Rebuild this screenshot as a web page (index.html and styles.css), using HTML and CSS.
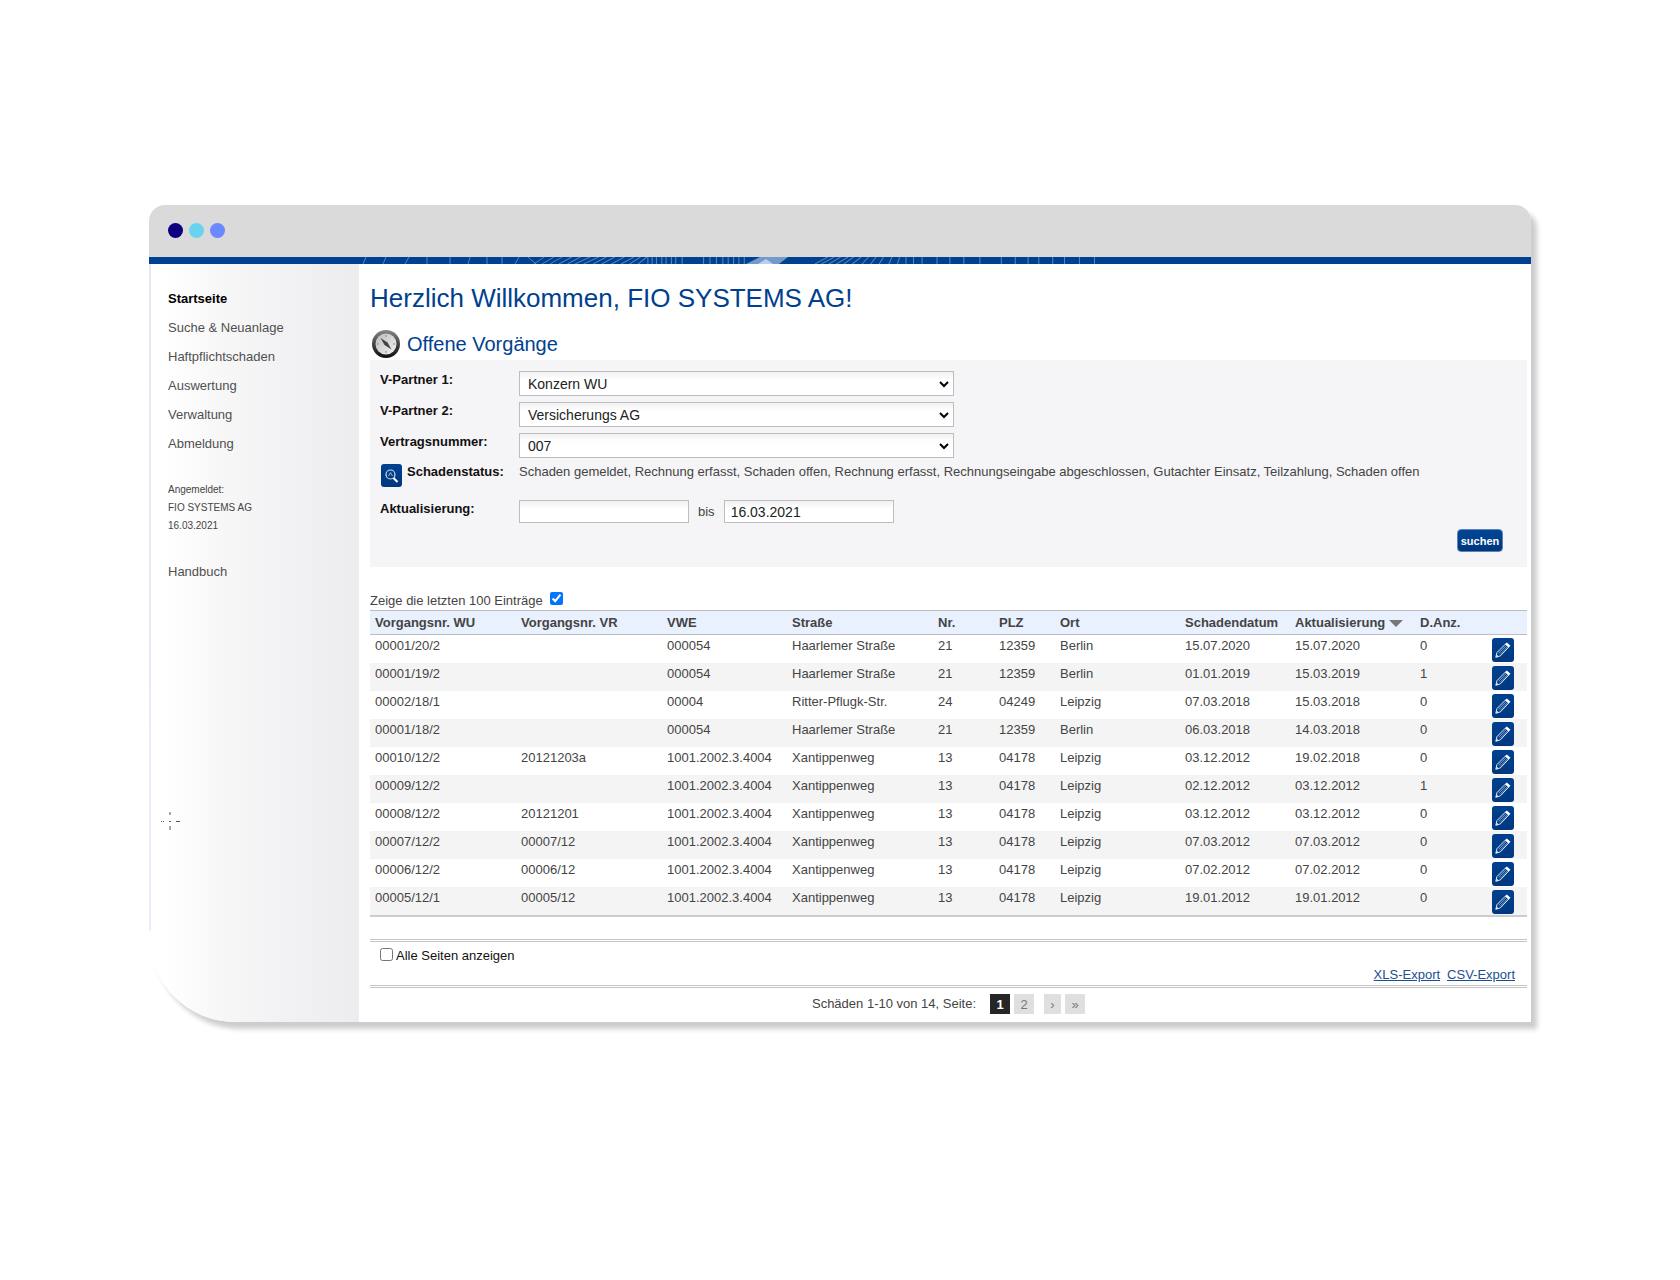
FILE: index.html
```html
<!DOCTYPE html>
<html lang="de">
<head>
<meta charset="utf-8">
<title>Offene Vorgänge</title>
<link rel="stylesheet" href="styles.css">
</head>
<body>
<svg class="defs" aria-hidden="true">
  <symbol id="pencil" viewBox="0 0 22 24">
    <path d="M3.800 19.300 L5 14.500 L13.500 6 L16.800 9 L8.500 17.800 Z" fill="none" stroke="#dfe9f7" stroke-width="1"/>
    <path d="M6.500 15.300 L14 7.800 M8 16.500 L15.300 9" stroke="#a9bfe0" stroke-width=".8"/>
    <path d="M13 6.300 L14.800 4.500 L18.500 7.700 L16.700 9.600 Z" fill="#fff"/>
    <path d="M3.800 19.300 L4.600 16.400 L6.800 18.500 Z" fill="#dfe9f7"/>
  </symbol>
</svg>
<div class="window">
  <div class="titlebar"><span class="dot navy"></span><span class="dot cyan"></span><span class="dot blue"></span></div>
  <div class="stripe">
    <svg class="pattern" width="740" height="7" viewBox="0 0 740 7" aria-hidden="true">
      <g stroke="#8fb0da" stroke-width="1" opacity=".6" fill="none">
        <path d="M4 0l-3 7M24 0l-3 7M47 0l-4 7M65 0v7M88 0v7M108 0l-2 7M125 0v7M140 0v7M157 0l-4 7M166 0l8 7M172 7l10-7M180 7l12-7M188 7l12-7"/>
        <path transform="translate(-14) scale(1.071 1)" d="M197 7l12-7M205 7l12-7M212 7l14-7M220 7l14-7M229 7l12-7M237 7l12-7M246 7l12-7M255 7l12-7M263 7l10-7M271 7l8-7M280 0v7M284 0v7M288 0v7M293 0v7M297 0v7M302 0v7M306 0v7M312 0v7M332 0v7M338 0v7M344 0v7M350 0v7M355 0v7M360 0v7M365 0v7M370 0v7M436 7l12-7M442 7l12-7M449 7l11-7M456 7l11-7M463 7l9-7M471 7l8-7M480 7l6-7M488 7l5-7M496 7l4-7M505 7l3-7M513 7l2-7M521 0v7M528 0v7M536 0v7M550 0v7M562 0v7M575 0v7M590 0v7M610 0v7M623 0v7M635 0v7M645 0v7M658 0v7M669 0v7M683 0v7M697 0v7"/>
      </g>
      <path d="M384 7l14-7h28l-9 7z" fill="#8fb0da" opacity=".8"/>
      <path d="M396 7l8-5 7 5z" fill="#dbe7f5" opacity=".7"/>
    </svg>
  </div>
  <div class="body">
    <aside class="sidebar">
      <nav class="menu">
        <a class="current" href="#">Startseite</a>
        <a href="#">Suche &amp; Neuanlage</a>
        <a href="#">Haftpflichtschaden</a>
        <a href="#">Auswertung</a>
        <a href="#">Verwaltung</a>
        <a href="#">Abmeldung</a>
      </nav>
      <p class="session">Angemeldet:<br>FIO SYSTEMS AG<br>16.03.2021</p>
      <nav class="menu"><a href="#">Handbuch</a></nav>
      <svg class="crosshair" width="20" height="20" viewBox="0 0 20 20" aria-hidden="true">
        <path d="M1 10.500h1M3 10.500h1M9 10.500h2M16 10.500h4M10 1v3M10 15v4" stroke="#555" stroke-width="1"/>
      </svg>
    </aside>
    <main class="content">
      <h1>Herzlich Willkommen, FIO SYSTEMS AG!</h1>
      <div class="heading">
        <svg width="32" height="32" viewBox="0 0 32 32" aria-hidden="true">
          <defs>
            <linearGradient id="rim" x1="0" y1="0" x2="0" y2="1"><stop offset="0" stop-color="#888"/><stop offset=".5" stop-color="#444"/><stop offset="1" stop-color="#111"/></linearGradient>
            <linearGradient id="face" x1="0" y1="0" x2="1" y2="1"><stop offset="0" stop-color="#bbb"/><stop offset="1" stop-color="#f4f4f4"/></linearGradient>
          </defs>
          <circle cx="16" cy="16" r="14" fill="url(#rim)"/>
          <circle cx="16" cy="16" r="10.500" fill="url(#face)"/>
          <path d="M16 7v2M16 23v2M7 16h2M23 16h2" stroke="#888"/>
          <path d="M10.500 10L17.500 14.500L21.500 21.500L14.500 17Z" fill="#444"/>
        </svg>
        <h2>Offene Vorgänge</h2>
      </div>
      <form class="filter">
        <div class="row"><label for="p1">V-Partner 1:</label>
          <div class="select"><select id="p1"><option>Konzern WU</option></select><svg width="10" height="7" viewBox="0 0 10 7"><path d="M1 1l4 4 4-4" fill="none" stroke="#000" stroke-width="2"/></svg></div></div>
        <div class="row"><label for="p2">V-Partner 2:</label>
          <div class="select"><select id="p2"><option>Versicherungs AG</option></select><svg width="10" height="7" viewBox="0 0 10 7"><path d="M1 1l4 4 4-4" fill="none" stroke="#000" stroke-width="2"/></svg></div></div>
        <div class="row"><label for="vn">Vertragsnummer:</label>
          <div class="select"><select id="vn"><option>007</option></select><svg width="10" height="7" viewBox="0 0 10 7"><path d="M1 1l4 4 4-4" fill="none" stroke="#000" stroke-width="2"/></svg></div></div>
        <div class="row status">
          <div class="caption"><button type="button" class="icon" aria-label="Schadenstatus suchen"><svg width="21" height="23" viewBox="0 0 21 23"><circle cx="9.500" cy="10.500" r="4.500" fill="none" stroke="#cfdcf0" stroke-width="1.200"/><path d="M12.500 14l4 4" stroke="#fff" stroke-width="2.200"/><path d="M7.500 12l2-3.500 2 3.500" fill="none" stroke="#9db8de"/></svg></button><span>Schadenstatus:</span></div>
          <span>Schaden gemeldet, Rechnung erfasst, Schaden offen, Rechnung erfasst, Rechnungseingabe abgeschlossen, Gutachter Einsatz, Teilzahlung, Schaden offen</span>
        </div>
        <div class="row dates"><label for="von">Aktualisierung:</label>
          <div class="range"><input id="von" type="text"><label for="bis">bis</label><input id="bis" type="text" value="16.03.2021"></div></div>
        <button type="button" class="search">suchen</button>
      </form>
      <div class="latest"><label for="last">Zeige die letzten 100 Einträge</label><input id="last" type="checkbox" checked></div>
      <table>
        <colgroup><col class="c-wu"><col class="c-vr"><col class="c-vwe"><col class="c-str"><col class="c-nr"><col class="c-plz"><col class="c-ort"><col class="c-dat"><col class="c-akt"><col class="c-anz"><col></colgroup>
        <thead><tr><th>Vorgangsnr. WU</th><th>Vorgangsnr. VR</th><th>VWE</th><th>Straße</th><th>Nr.</th><th>PLZ</th><th>Ort</th><th>Schadendatum</th><th>Aktualisierung <svg width="14" height="7" viewBox="0 0 14 7"><path d="M0 0h14L7 7z" fill="#777"/></svg></th><th>D.Anz.</th><th></th></tr></thead>
        <tbody>
          <tr><td>00001/20/2</td><td></td><td>000054</td><td>Haarlemer Straße</td><td>21</td><td>12359</td><td>Berlin</td><td>15.07.2020</td><td>15.07.2020</td><td>0</td><td><button class="icon" aria-label="Bearbeiten"><svg width="22" height="24"><use href="#pencil"/></svg></button></td></tr>
          <tr><td>00001/19/2</td><td></td><td>000054</td><td>Haarlemer Straße</td><td>21</td><td>12359</td><td>Berlin</td><td>01.01.2019</td><td>15.03.2019</td><td>1</td><td><button class="icon" aria-label="Bearbeiten"><svg width="22" height="24"><use href="#pencil"/></svg></button></td></tr>
          <tr><td>00002/18/1</td><td></td><td>00004</td><td>Ritter-Pflugk-Str.</td><td>24</td><td>04249</td><td>Leipzig</td><td>07.03.2018</td><td>15.03.2018</td><td>0</td><td><button class="icon" aria-label="Bearbeiten"><svg width="22" height="24"><use href="#pencil"/></svg></button></td></tr>
          <tr><td>00001/18/2</td><td></td><td>000054</td><td>Haarlemer Straße</td><td>21</td><td>12359</td><td>Berlin</td><td>06.03.2018</td><td>14.03.2018</td><td>0</td><td><button class="icon" aria-label="Bearbeiten"><svg width="22" height="24"><use href="#pencil"/></svg></button></td></tr>
          <tr><td>00010/12/2</td><td>20121203a</td><td>1001.2002.3.4004</td><td>Xantippenweg</td><td>13</td><td>04178</td><td>Leipzig</td><td>03.12.2012</td><td>19.02.2018</td><td>0</td><td><button class="icon" aria-label="Bearbeiten"><svg width="22" height="24"><use href="#pencil"/></svg></button></td></tr>
          <tr><td>00009/12/2</td><td></td><td>1001.2002.3.4004</td><td>Xantippenweg</td><td>13</td><td>04178</td><td>Leipzig</td><td>02.12.2012</td><td>03.12.2012</td><td>1</td><td><button class="icon" aria-label="Bearbeiten"><svg width="22" height="24"><use href="#pencil"/></svg></button></td></tr>
          <tr><td>00008/12/2</td><td>20121201</td><td>1001.2002.3.4004</td><td>Xantippenweg</td><td>13</td><td>04178</td><td>Leipzig</td><td>03.12.2012</td><td>03.12.2012</td><td>0</td><td><button class="icon" aria-label="Bearbeiten"><svg width="22" height="24"><use href="#pencil"/></svg></button></td></tr>
          <tr><td>00007/12/2</td><td>00007/12</td><td>1001.2002.3.4004</td><td>Xantippenweg</td><td>13</td><td>04178</td><td>Leipzig</td><td>07.03.2012</td><td>07.03.2012</td><td>0</td><td><button class="icon" aria-label="Bearbeiten"><svg width="22" height="24"><use href="#pencil"/></svg></button></td></tr>
          <tr><td>00006/12/2</td><td>00006/12</td><td>1001.2002.3.4004</td><td>Xantippenweg</td><td>13</td><td>04178</td><td>Leipzig</td><td>07.02.2012</td><td>07.02.2012</td><td>0</td><td><button class="icon" aria-label="Bearbeiten"><svg width="22" height="24"><use href="#pencil"/></svg></button></td></tr>
          <tr><td>00005/12/1</td><td>00005/12</td><td>1001.2002.3.4004</td><td>Xantippenweg</td><td>13</td><td>04178</td><td>Leipzig</td><td>19.01.2012</td><td>19.01.2012</td><td>0</td><td><button class="icon" aria-label="Bearbeiten"><svg width="22" height="24"><use href="#pencil"/></svg></button></td></tr>
        </tbody>
      </table>
      <div class="options">
        <label><input type="checkbox">Alle Seiten anzeigen</label>
        <div class="exports"><a href="#">XLS-Export</a><a href="#">CSV-Export</a></div>
      </div>
      <div class="pager"><span>Schäden 1-10 von 14, Seite:</span>
        <div class="pages"><button class="active">1</button><button>2</button></div>
        <div class="pages"><button class="step">›</button><button>»</button></div></div>
    </main>
  </div>
</div>
</body>
</html>
```
FILE: styles.css
```css
* { box-sizing: border-box; }
body {
  margin: 0;
  padding: 205px 149px 64px;
  background: #fff;
  color: #444;
  font: 13px/16px "Liberation Sans", Arial, sans-serif;
}
.defs { position: absolute; width: 0; height: 0; }
.window {
  border-radius: 16px 16px 0 86px;
  overflow: hidden;
  background: #fff;
  box-shadow: 6px 7px 5px #cdcdcf;
}
.titlebar {
  display: flex;
  align-items: center;
  gap: 6px;
  height: 52px;
  padding: 0 19px 2px;
  background: #dadada;
}
.dot { width: 15px; height: 15px; border-radius: 50%; }
.navy { background: #0c0080; }
.cyan { background: #69d2ee; }
.blue { background: #6a88ff; }
.stripe { height: 7px; padding-left: 213px; background: #004192; }
.pattern { display: block; }
.body { display: grid; grid-template-columns: 210px 1fr; }
.sidebar {
  padding: 27px 0 0 19px;
  background:
    linear-gradient(#e2e8ef, #e8eefc) 0 0 / 2px 88% no-repeat,
    linear-gradient(90deg, transparent 8%, #f8f7f8 34%, #f2f1f3 62%, #edecee);
}
.menu { display: flex; flex-direction: column; gap: 13px; }
.menu a { color: #505050; text-decoration: none; }
.menu .current { color: #000; font-weight: bold; }
.session { margin: 29px 0; font-size: 10px; line-height: 18px; }
.crosshair { display: block; margin: 231px 0 0 -8px; }
.content { padding: 18px 4px 8px 11px; min-width: 0; }
h1, h2 { margin: 0; color: #00418f; font-weight: normal; }
h1 { font-size: 26px; line-height: 32px; }
h2 { font-size: 20px; line-height: 24px; }
.heading { display: flex; align-items: center; gap: 5px; margin-top: 14px; }
.filter {
  display: flex;
  flex-direction: column;
  gap: 6px;
  min-height: 207px;
  padding: 11px 10px;
  background: #f5f4f6;
}
.row { display: grid; grid-template-columns: 139px 1fr; }
.row > label, .caption { color: #111; font-weight: bold; }
.row > label { padding-top: 1px; }
.select { position: relative; width: 435px; height: 25px; }
.select svg { position: absolute; right: 5px; top: 10px; pointer-events: none; }
select, input[type="text"] {
  border: 1px solid #bdbdbf;
  background: linear-gradient(#f1f1f1, #fff 8px);
  color: #222;
  font: 14px "Liberation Sans", Arial, sans-serif;
}
select { width: 100%; height: 25px; padding: 0 8px; appearance: none; border-radius: 0; }
.caption { display: flex; gap: 5px; }
.icon {
  display: block;
  padding: 0;
  border: 0;
  border-radius: 3px;
  background: linear-gradient(#00418f, #00387f);
}
.icon svg { display: block; }
.caption .icon { align-self: start; margin-left: 1px; }
.dates { margin-top: 7px; }
.range { display: flex; align-items: center; gap: 9px; }
.range input { width: 170px; height: 23px; padding: 0 6px; }
.search {
  align-self: flex-end;
  width: 46px;
  height: 23px;
  margin-right: 14px;
  padding: 0;
  border: 1px solid #5c82b8;
  border-radius: 4px;
  background: linear-gradient(#004798, #00367c);
  color: #fff;
  font: bold 11px "Liberation Sans", Arial, sans-serif;
}
.latest { display: flex; align-items: flex-start; gap: 7px; margin: 25px 0 1px; }
.latest label { padding-top: 1px; }
input[type="checkbox"] { width: 13px; height: 13px; margin: 0; }
table { width: 100%; table-layout: fixed; border-collapse: collapse; border-bottom: 2px solid #cdccd0; }
.c-wu, .c-vr { width: 146px; }
.c-vwe { width: 125px; }
.c-str { width: 146px; }
.c-nr, .c-plz { width: 61px; }
.c-ort, .c-akt { width: 125px; }
.c-dat { width: 110px; }
.c-anz { width: 72px; }
th { height: 24px; padding: 0 5px; border: 1px solid #bcbcc4; border-width: 1px 0; background: #e8f1fd; text-align: left; white-space: nowrap; }
td { height: 28px; padding: 3px 5px 0; vertical-align: top; }
td:last-child { padding: 3px 5px 1px; }
tbody tr:nth-child(even) { background: #f5f4f5; }
.options {
  display: flex;
  justify-content: space-between;
  height: 49px;
  margin-top: 22px;
  padding: 6px 12px 2px 10px;
  border: 3px double #c5c5c8;
  border-width: 3px 0;
}
.options label { display: flex; align-items: flex-start; gap: 3px; color: #111; }
.exports { display: flex; gap: 7px; align-self: flex-end; }
.exports a { color: #1c4f92; }
.pager { display: flex; justify-content: center; align-items: center; gap: 14px; margin-top: 6px; }
.pages { display: flex; gap: 4px; }
.pager .pages + .pages { margin-left: -4px; }
.pages button { width: 20px; height: 20px; padding: 0; border: 0; background: #dfdfdf; color: #777; font: 13px "Liberation Sans", Arial, sans-serif; }
.pages .step { width: 17px; }
.pages .active { background: #262626; color: #fff; font-weight: bold; }
```
